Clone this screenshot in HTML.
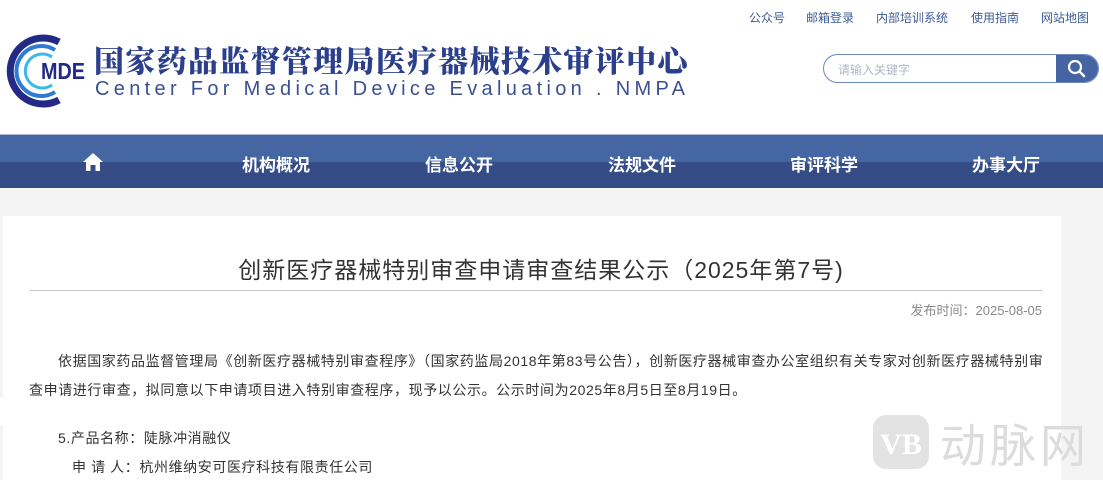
<!DOCTYPE html>
<html><head><meta charset="utf-8"><style>
*{margin:0;padding:0;box-sizing:border-box}
body{width:1103px;height:480px;overflow:hidden;background:#f4f4f4;font-family:"Liberation Sans","Noto Sans CJK SC",sans-serif;position:relative}
.hdr{position:absolute;left:0;top:0;width:1103px;height:134px;background:#fff}
.top{position:absolute;top:9px;font-size:12px;color:#3d5c96}
.cn{position:absolute;left:94px;top:37px;font-family:"Noto Serif CJK SC","Noto Sans CJK SC",serif;font-weight:900;font-size:30px;color:#2b3f8c;letter-spacing:1.3px;white-space:nowrap}
.search{position:absolute;left:823px;top:54px;width:276px;height:29px;border:1.5px solid #6d88c0;border-radius:15px;background:#fff;overflow:hidden}
.search span{position:absolute;left:14px;top:6px;font-size:12px;color:#b0b6c4}
.search .btn{position:absolute;right:0;top:0;width:42px;height:100%;background:#4565a2}
.nav{position:absolute;left:0;top:134px;width:1103px;height:54px;background:linear-gradient(#4667a3 0,#4466a1 50%,#354c87 52%,#344b85 100%);border-top:1px solid #a9b9d6}
.nav div{position:absolute;top:16px;font-size:17px;font-weight:bold;color:#fff;transform:translateX(-50%);white-space:nowrap}
.card{position:absolute;left:3px;top:216px;width:1058px;height:264px;background:#fff}
h1{position:absolute;left:0;width:1082px;text-align:center;top:251px;font-size:23px;letter-spacing:1px;font-weight:normal;color:#333}
.line{position:absolute;left:30px;top:290px;width:1012px;height:1px;background:#c8c8c8}
.date{position:absolute;right:61px;top:300px;font-size:13px;color:#8a8a8a}
.p{position:absolute;font-size:14px;color:#333;white-space:nowrap;letter-spacing:0.6px}
.wm{position:absolute;left:940px;top:410px;font-size:46px;color:#dcdcdc;letter-spacing:4px}
</style></head><body>
<div class="hdr">
<div class="top" style="left:749px">公众号</div>
<div class="top" style="left:806px">邮箱登录</div>
<div class="top" style="left:876px">内部培训系统</div>
<div class="top" style="left:971px">使用指南</div>
<div class="top" style="left:1041px">网站地图</div>
<svg style="position:absolute;left:3px;top:34px" width="86" height="74" viewBox="0 0 86 74">
<path d="M56 8 A33 33 0 1 0 56 66" fill="none" stroke="#232a86" stroke-width="7"/>
<path d="M52 16 A25 25 0 1 0 52 58" fill="none" stroke="#2f7bd0" stroke-width="4"/>
<path d="M49 23 A17 17 0 1 0 49 51" fill="none" stroke="#3cb8e6" stroke-width="3"/>
<text x="38" y="45" font-family="Liberation Sans" font-weight="bold" font-size="23" fill="#232a86" textLength="44" lengthAdjust="spacingAndGlyphs">MDE</text>
</svg>
<div class="cn">国家药品监督管理局医疗器械技术审评中心</div>
<svg style="position:absolute;left:94px;top:74px" width="600" height="28"><text x="1" y="21" font-family="Liberation Sans" font-size="20" fill="#3b4f92" textLength="590" lengthAdjust="spacing">Center For Medical Device Evaluation . NMPA</text></svg>
<div class="search"><span>请输入关键字</span><div class="btn"><svg width="42" height="27" viewBox="0 0 42 27"><circle cx="19" cy="12" r="6" fill="none" stroke="#fff" stroke-width="2.2"/><path d="M23.5 16.5 L28 21" stroke="#fff" stroke-width="2.5" stroke-linecap="round"/></svg></div></div>
</div>
<div class="nav">
<svg style="position:absolute;left:82px;top:17px" width="22" height="20" viewBox="0 0 22 20"><path d="M11 1 L21 10 H18 V19 H13.5 V13 H8.5 V19 H4 V10 H1 Z" fill="#fff"/></svg>
<div style="left:276px">机构概况</div>
<div style="left:459px">信息公开</div>
<div style="left:642px">法规文件</div>
<div style="left:824px">审评科学</div>
<div style="left:1006px">办事大厅</div>
</div>
<div class="card"></div>
<h1>创新医疗器械特别审查申请审查结果公示（2025年第7号)</h1>
<div class="line"></div>
<div class="date">发布时间：2025-08-05</div>
<div class="p" style="left:58px;top:351px">依据国家药品监督管理局《创新医疗器械特别审查程序》（国家药监局2018年第83号公告），创新医疗器械审查办公室组织有关专家对创新医疗器械特别审</div>
<div class="p" style="left:29px;top:380px">查申请进行审查，拟同意以下申请项目进入特别审查程序，现予以公示。公示时间为2025年8月5日至8月19日。</div>
<div style="position:absolute;left:0;top:397px;width:1061px;height:28px;background:#fff"></div>
<div class="p" style="left:58px;top:428px">5.产品名称：陡脉冲消融仪</div>
<div class="p" style="left:72px;top:457px">申 请 人：杭州维纳安可医疗科技有限责任公司</div>
<svg style="position:absolute;left:872px;top:414px" width="58" height="56" viewBox="0 0 58 56"><rect x="1" y="1" width="56" height="54" rx="13" fill="#e3e3e3"/><text x="29" y="40" text-anchor="middle" font-family="Liberation Serif" font-weight="bold" font-size="30" fill="#fff">VB</text></svg>
<div class="wm">动脉网</div>
</body></html>
